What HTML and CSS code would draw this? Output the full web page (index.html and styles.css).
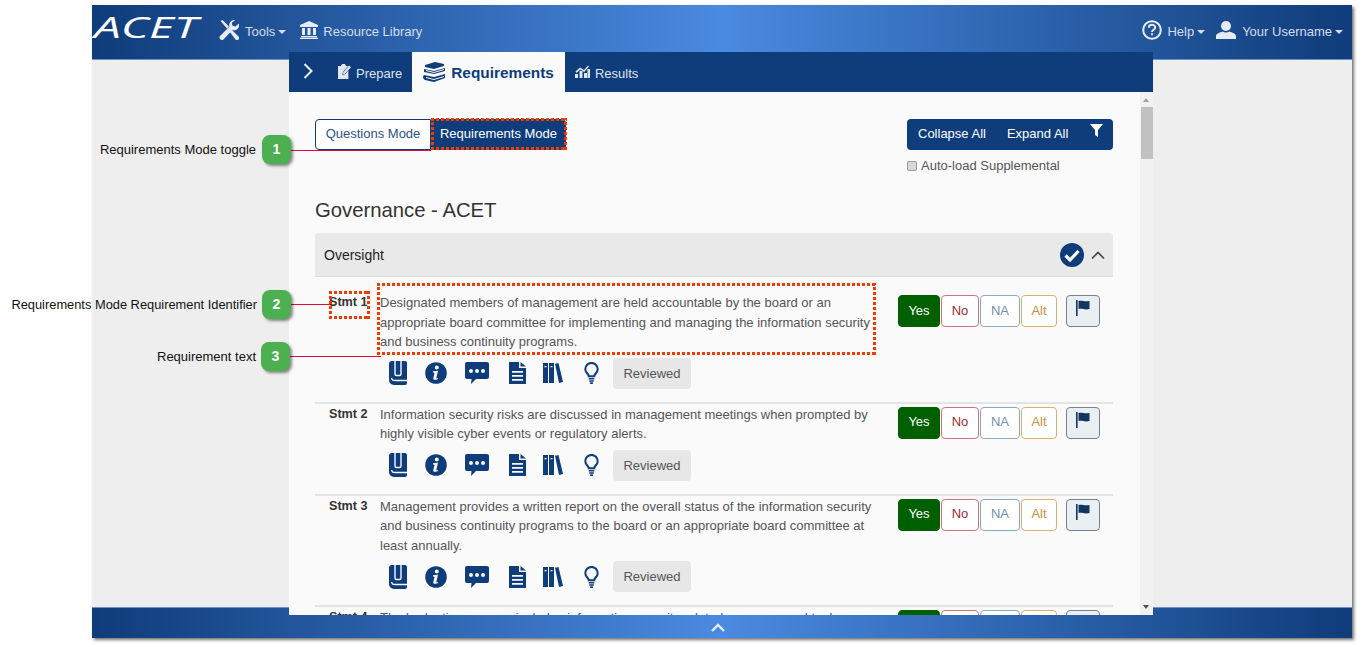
FILE: index.html
```html
<!DOCTYPE html>
<html>
  <head>
    <meta charset="UTF-8">
    <title>ACET - Requirements Mode</title>
    <link rel="stylesheet" href="styles.css">
  </head>
  <body>
    <!-- Icones usados nas linhas -->
    <svg class="sprite" width="0" height="0">
      <symbol id="i-book" viewBox="0 0 18 24">
        <path d="M3 0h13a2 2 0 0 1 2 2v20a2 2 0 0 1-2 2H5a5 5 0 0 1-5-5V3a3 3 0 0 1 3-3z"/>
        <path fill="none" stroke="#fafafa" stroke-width="1.400" d="M6 0v13a1.500 1.500 0 0 0 1.500 1.500h3A1.500 1.500 0 0 0 12 13V0M18 19.500H6.500c-3 0-3-.2-4-2.500"/>
      </symbol>
      <symbol id="i-info" viewBox="0 0 22 22">
        <circle cx="11" cy="11" r="10.800"/>
        <path fill="#fafafa" d="M11.800 3.500a2 2 0 1 1 0 4 2 2 0 0 1 0-4zM8 9.300l5-.6-1.700 7.300c-.1.500.4.600 1.700 0l-.2.900c-1.800 1.100-4.800 1.500-4.500-.7l1.200-5.300-1.600-.6z"/>
      </symbol>
      <symbol id="i-comment" viewBox="0 0 24 24">
        <path fill-rule="evenodd" d="M2 1h20a2 2 0 0 1 2 2v13a2 2 0 0 1-2 2H11l-5 5 .5-5H2a2 2 0 0 1-2-2V3a2 2 0 0 1 2-2zm4 7a2 2 0 1 0 0 4 2 2 0 0 0 0-4zm6 0a2 2 0 1 0 0 4 2 2 0 0 0 0-4zm6 0a2 2 0 1 0 0 4 2 2 0 0 0 0-4z"/>
      </symbol>
      <symbol id="i-file" viewBox="0 0 17 22">
        <path fill-rule="evenodd" d="M0 0h10v6h7v16H0zm11.500 0l5.500 4.500h-5.500zM3 9v1.800h11V9zm0 4v1.800h11V13zm0 4v1.800h11V17z"/>
      </symbol>
      <symbol id="i-library" viewBox="0 0 20 20">
        <path fill-rule="evenodd" d="M0 0h5v20H0zM1.500 3v1.200h2V3zM6 0h5v20H6zM7.500 3v1.200h2V3zM12 .8L15.500 0 20 19l-4 1z"/>
      </symbol>
      <symbol id="i-bulb" viewBox="0 0 16 24">
        <path fill="none" stroke="currentColor" stroke-width="2.200" d="M5 15.500c0-2.500-3.800-3.800-3.800-7.700a6.800 6.800 0 0 1 13.600 0c0 3.900-3.800 5.200-3.800 7.700z"/>
        <path d="M5 17.500h6v1.500H5zM5.500 20h5v1.500h-5zM6.500 22h3v2h-3z"/>
      </symbol>
      <symbol id="i-flag" viewBox="0 0 14 16">
        <path d="M0 0h1.600v16H0zM2.500 1c3-1.200 6 1.200 11 0v8c-5 1.300-8-1.200-11 0z"/>
      </symbol>
    </svg>

    <div class="window">
      <header class="top-nav">
        <span class="logo">ACET</span>
        <a class="nav-item nav-tools">
          <svg class="nav-icon" width="20" height="20" viewBox="0 0 20 20"><path d="M1.500 1l2-1 6.500 6.500-2 2zM10.500 11.500l2-2 7 7a2 2 0 0 1-3 3z"/><path d="M15 0a5 5 0 0 0-4.500 6.600L1 16a2.500 2.500 0 0 0 3.500 3.500l9-9.500A5 5 0 0 0 19.800 3.500L16.500 6.500l-3-.8-.7-2.900L16 .2A5 5 0 0 0 15 0z"/></svg>
          Tools<i class="caret"></i>
        </a>
        <a class="nav-item nav-library">
          <svg class="nav-icon" width="18" height="18" viewBox="0 0 18 18"><path d="M9 0l9 4v2H0V4zM2 7h3v7H2zM7.500 7h3v7h-3zM13 7h3v7h-3zM1 15h16v1.200H1zM0 16.800h18V18H0z"/></svg>
          Resource Library
        </a>
        <span class="nav-spacer"></span>
        <a class="nav-item nav-help">
          <svg class="nav-icon" width="20" height="20" viewBox="0 0 20 20"><circle cx="10" cy="10" r="8.800" fill="none" stroke="currentColor" stroke-width="2"/><path fill="none" stroke="currentColor" stroke-width="2" d="M6.800 7.800c0-4 6.400-4 6.400-.3 0 2.300-3.200 2.300-3.200 4.500"/><path d="M9 13.300h2v2H9z"/></svg>
          Help<i class="caret"></i>
        </a>
        <a class="nav-item">
          <svg class="nav-icon" width="20" height="18" viewBox="0 0 20 18"><ellipse cx="10" cy="5" rx="5" ry="5"/><path d="M0 18v-3c0-2.500 4-3.500 6.500-4.500 2 1.300 5 1.300 7 0C16 11.500 20 12.500 20 15v3z"/></svg>
          Your Username<i class="caret"></i>
        </a>
      </header>

      <div class="backdrop"></div>

      <footer class="bottom-bar">
        <svg width="14" height="9" viewBox="0 0 14 9"><path fill="none" stroke="#e8eef8" stroke-width="2.400" d="M1 8l6-6 6 6"/></svg>
      </footer>

      <main class="panel">
        <nav class="tabs">
          <svg class="tab-arrow" width="10" height="16" viewBox="0 0 10 16"><path fill="none" stroke="#e8eef8" stroke-width="2" d="M1.500 1l7 7-7 7"/></svg>
          <a class="tab tab-prepare">
            <svg width="14" height="15" viewBox="0 0 14 15"><path fill="#dfe6f0" d="M1 2h3l1-2h3l1 2h2l-5 6-.6 3 3-1 3-3.500V15H1z"/><path fill="#dfe6f0" d="M12 1.500l2 1.800-6 6.500-2 .4.400-2z"/></svg>
            Prepare
          </a>
          <a class="tab tab-active">
            <svg width="23" height="20" viewBox="0 0 23 20"><path fill="#0f3c7a" d="M2 3l10-3 9 2v2L11 7 2 5zM1 7l10 2 11-3v3L11 12 1 10zM1 13l10 2 11-3v4L11 20l-9-2a3 3 0 0 1-1-5z"/><path fill="none" stroke="#fafafa" d="M3 15.500l8 2 10-3M3 8.500l8 2 10-3"/></svg>
            Requirements
          </a>
          <a class="tab">
            <svg width="15" height="13" viewBox="0 0 15 13"><path fill="#dfe6f0" d="M0 9h3v4H0zM4.500 6h3v7h-3zM9 8h3v5H9zM12.500 4h2.500v9h-2.500zM.5 6.500L5 2.500l4 2.500L13 .5l1 1L9.200 7 5.200 4.500 1.500 8z"/></svg>
            Results
          </a>
        </nav>

        <div class="panel-body">
          <div class="content">
            <div class="toolbar">
              <div class="mode-toggle">
                <button class="mode-btn">Questions Mode</button>
                <button class="mode-btn mode-on">Requirements Mode</button>
              </div>
              <div class="toolbar-right">
                <div class="bulk-actions">
                  <button class="bulk-btn">Collapse All</button>
                  <button class="bulk-btn">Expand All</button>
                  <button class="bulk-btn bulk-filter">
                    <svg width="13" height="13" viewBox="0 0 13 13"><path fill="#fff" d="M0 0h13L8 6v7L5 11V6z"/></svg>
                  </button>
                </div>
                <label class="auto-load"><input type="checkbox"> Auto-load Supplemental</label>
              </div>
            </div>

            <h2 class="domain-title">Governance - ACET</h2>

            <div class="accordion-head">
              <span>Oversight</span>
              <svg class="done-icon" width="24" height="24" viewBox="0 0 24 24"><circle cx="12" cy="12" r="12" fill="#0f3c7a"/><path fill="none" stroke="#fff" stroke-width="3.200" d="M5.500 12.500l4.500 4.500 8.500-9"/></svg>
              <svg class="fold-icon" width="14" height="8" viewBox="0 0 14 8"><path fill="none" stroke="#444" stroke-width="1.600" d="M1 7.500l6-6 6 6"/></svg>
            </div>

            <div class="stmt stmt-first">
              <b class="stmt-id">Stmt 1</b>
              <div class="stmt-main">
                <p class="stmt-text">Designated members of management are held accountable by the board or an appropriate board committee for implementing and managing the information security and business continuity programs.</p>
                <div class="stmt-tools">
                  <svg class="t-book"><use href="#i-book"/></svg>
                  <svg class="t-info"><use href="#i-info"/></svg>
                  <svg class="t-comment"><use href="#i-comment"/></svg>
                  <svg class="t-file"><use href="#i-file"/></svg>
                  <svg class="t-library"><use href="#i-library"/></svg>
                  <svg class="t-bulb"><use href="#i-bulb"/></svg>
                  <button class="reviewed">Reviewed</button>
                </div>
              </div>
              <div class="answers">
                <button class="ans ans-yes">Yes</button>
                <button class="ans ans-no">No</button>
                <button class="ans ans-na">NA</button>
                <button class="ans ans-alt">Alt</button>
                <button class="ans ans-flag"><svg><use href="#i-flag"/></svg></button>
              </div>
            </div>

            <div class="stmt">
              <b class="stmt-id">Stmt 2</b>
              <div class="stmt-main">
                <p class="stmt-text">Information security risks are discussed in management meetings when prompted by highly visible cyber events or regulatory alerts.</p>
                <div class="stmt-tools">
                  <svg class="t-book"><use href="#i-book"/></svg>
                  <svg class="t-info"><use href="#i-info"/></svg>
                  <svg class="t-comment"><use href="#i-comment"/></svg>
                  <svg class="t-file"><use href="#i-file"/></svg>
                  <svg class="t-library"><use href="#i-library"/></svg>
                  <svg class="t-bulb"><use href="#i-bulb"/></svg>
                  <button class="reviewed">Reviewed</button>
                </div>
              </div>
              <div class="answers">
                <button class="ans ans-yes">Yes</button>
                <button class="ans ans-no">No</button>
                <button class="ans ans-na">NA</button>
                <button class="ans ans-alt">Alt</button>
                <button class="ans ans-flag"><svg><use href="#i-flag"/></svg></button>
              </div>
            </div>

            <div class="stmt">
              <b class="stmt-id">Stmt 3</b>
              <div class="stmt-main">
                <p class="stmt-text">Management provides a written report on the overall status of the information security and business continuity programs to the board or an appropriate board committee at least annually.</p>
                <div class="stmt-tools">
                  <svg class="t-book"><use href="#i-book"/></svg>
                  <svg class="t-info"><use href="#i-info"/></svg>
                  <svg class="t-comment"><use href="#i-comment"/></svg>
                  <svg class="t-file"><use href="#i-file"/></svg>
                  <svg class="t-library"><use href="#i-library"/></svg>
                  <svg class="t-bulb"><use href="#i-bulb"/></svg>
                  <button class="reviewed">Reviewed</button>
                </div>
              </div>
              <div class="answers">
                <button class="ans ans-yes">Yes</button>
                <button class="ans ans-no">No</button>
                <button class="ans ans-na">NA</button>
                <button class="ans ans-alt">Alt</button>
                <button class="ans ans-flag"><svg><use href="#i-flag"/></svg></button>
              </div>
            </div>

            <div class="stmt">
              <b class="stmt-id">Stmt 4</b>
              <div class="stmt-main">
                <p class="stmt-text">The budgeting process includes information security related expenses and tools.</p>
              </div>
              <div class="answers">
                <button class="ans ans-yes">Yes</button>
                <button class="ans ans-no">No</button>
                <button class="ans ans-na">NA</button>
                <button class="ans ans-alt">Alt</button>
                <button class="ans ans-flag"><svg><use href="#i-flag"/></svg></button>
              </div>
            </div>
          </div>

          <div class="scrollbar">
            <i class="arrow-up"></i>
            <span class="thumb"></span>
            <i class="arrow-down"></i>
          </div>
        </div>
      </main>
    </div>

    <!-- Anotacoes por cima da tela -->
    <span class="note note-1">Requirements Mode toggle</span>
    <span class="badge badge-1">1</span>
    <span class="leader leader-1"></span>
    <span class="dashed dashed-1"></span>

    <span class="note note-2">Requirements Mode Requirement Identifier</span>
    <span class="badge badge-2">2</span>
    <span class="leader leader-2"></span>
    <span class="dashed dashed-2"></span>

    <span class="note note-3">Requirement text</span>
    <span class="badge badge-3">3</span>
    <span class="leader leader-3"></span>
    <span class="dashed dashed-3"></span>
  </body>
</html>
```

FILE: styles.css
```css
/* Pagina */
html, body {
  height: 647px;
  overflow: hidden;
}

body {
  margin: 0;
  position: relative;
  background-color: white;
  font-family: "Liberation Sans", Arial, sans-serif;
  font-size: 13px;
  color: #555;
}

.sprite {
  position: absolute;
}

button {
  font-family: inherit;
  font-size: 13px;
  cursor: pointer;
}

/* Janela */
.window {
  display: grid;
  grid-template-rows: 55px 1fr 31px;
  grid-template-columns: 1fr;
  width: 1260px;
  height: 633px;
  margin: 5px 0 0 92px;
  box-shadow: 2px 2px 3px rgba(0, 0, 0, 0.55);
  background-color: #eeeeee;
}

.top-nav {
  grid-row: 1;
  grid-column: 1;
  display: flex;
  align-items: center;
  padding: 0 9px 1px 2px;
  color: #d5deec;
  background: linear-gradient(90deg, #0f3c7a 0%, #4a8ae0 50%, #0f3c7a 100%);
  border-bottom: 1px solid #6e93c8;
  box-sizing: border-box;
}

.logo {
  width: 125px;
  margin-top: -11px;
  font-family: "Open Sans", sans-serif;
  font-style: italic;
  font-size: 29px;
  color: white;
  transform: scaleX(1.65);
  transform-origin: left center;
}

.nav-item {
  display: flex;
  align-items: center;
  gap: 6px;
  white-space: nowrap;
}

.nav-icon {
  fill: currentColor;
  color: #e6ebf4;
  margin-top: -4px;
}

.nav-tools {
  margin-right: 14px;
}

.nav-library {
  gap: 5px;
}

.nav-spacer {
  flex: 1;
}

.nav-help {
  margin-right: 11px;
}

.nav-help .nav-icon {
  margin-right: -1px;
}

.caret {
  display: inline-block;
  margin-left: -3px;
  border-top: 4px solid;
  border-left: 4px solid transparent;
  border-right: 4px solid transparent;
}

.backdrop {
  grid-row: 2;
  grid-column: 1;
}

.bottom-bar {
  grid-row: 3;
  grid-column: 1;
  display: flex;
  align-items: center;
  justify-content: center;
  background: linear-gradient(90deg, #0f3c7a 0%, #4a8ae0 50%, #0f3c7a 100%);
  border-top: 1px solid #6e93c8;
  box-sizing: border-box;
}

.bottom-bar svg {
  margin: 9px 8px 0 0;
}

/* Painel central */
.panel {
  grid-row: 1 / -1;
  grid-column: 1;
  z-index: 1;
  display: flex;
  flex-direction: column;
  width: 864px;
  margin: 47px 0 23px 197px;
  overflow: hidden;
}

.tabs {
  display: flex;
  align-items: center;
  flex: none;
  height: 40px;
  background-color: #0f3c7a;
  color: #dfe6f0;
}

.tab-arrow {
  margin: -3px 0 0 14px;
}

.tab {
  display: flex;
  align-items: center;
  gap: 5px;
  height: 40px;
  padding: 2px 10px 0;
  box-sizing: border-box;
}

.tab svg {
  margin-top: -3px;
}

.tab-prepare {
  margin-left: 14px;
}

.tab-active {
  padding: 2px 11px 0 11px;
  background-color: #fafafa;
  color: #0f3c7a;
  font-weight: bold;
  font-size: 15.400px;
}

.panel-body {
  flex: 1;
  display: flex;
  min-height: 0;
  background-color: #fafafa;
}

.content {
  flex: 1;
  padding: 27px 27px 0 26px;
  overflow: hidden;
}

.scrollbar {
  flex: none;
  position: relative;
  width: 13px;
  background-color: #f1f1f1;
}

.thumb {
  position: absolute;
  top: 15px;
  left: 1px;
  right: 0;
  height: 52px;
  background-color: #c1c1c1;
}

.arrow-up, .arrow-down {
  position: absolute;
  left: 3px;
  border-left: 3.500px solid transparent;
  border-right: 3.500px solid transparent;
}

.arrow-up {
  top: 6px;
  border-bottom: 4px solid #a3a3a3;
}

.arrow-down {
  bottom: 6px;
  border-top: 4px solid #505050;
}

/* Barra de modos */
.toolbar {
  display: flex;
  justify-content: space-between;
  align-items: flex-start;
}

.mode-toggle {
  display: flex;
}

.mode-btn {
  width: 116px;
  height: 31px;
  padding: 0 0 2px;
  border: 1px solid #0f3c7a;
  border-radius: 4px 0 0 4px;
  background-color: white;
  color: #2a5288;
}

.mode-on {
  width: 135px;
  border-radius: 0 4px 4px 0;
  background-color: #0f3c7a;
  color: white;
}

.bulk-actions {
  display: flex;
  width: 206px;
  height: 31px;
  border-radius: 4px;
  background-color: #0f3c7a;
}

.bulk-btn {
  padding: 0 0 2px 11px;
  margin-right: 21px;
  border: none;
  background: none;
  color: white;
}

.bulk-btn + .bulk-btn {
  padding-left: 0;
  margin-right: 0;
}

.bulk-filter {
  margin-left: auto;
  padding: 0 10px 6px 0;
}

.auto-load {
  display: flex;
  align-items: center;
  gap: 4px;
  margin-top: 8px;
  color: #555;
}

.auto-load input {
  width: 10px;
  height: 10px;
  margin: 0;
  appearance: none;
  border: 1px solid #999;
  border-radius: 2px;
  background-color: #d8d8d8;
}

.domain-title {
  margin: 25px 0 11px;
  font-size: 20.300px;
  font-weight: normal;
  line-height: 24px;
  color: #333;
}

.accordion-head {
  display: flex;
  align-items: center;
  height: 44px;
  padding: 0 8px 0 9px;
  border-radius: 4px 4px 0 0;
  border-bottom: 1px solid #dddddd;
  background-color: #e9e9e9;
  box-sizing: border-box;
  font-size: 14px;
  color: #222;
}

.done-icon {
  margin-left: auto;
}

.fold-icon {
  margin-left: 7px;
}

/* Linhas de requisito */
.stmt {
  display: grid;
  grid-template-columns: 51px 518px 203px;
  padding: 1px 0 13px 14px;
  border-bottom: 2px solid #e4e4e4;
}

.stmt-first {
  padding-top: 16px;
}

.stmt-id {
  color: #333;
  font-size: 12.600px;
  line-height: 19.500px;
}

.stmt-text {
  margin: 0;
  width: 497px;
  line-height: 19.500px;
}

.stmt-tools {
  display: flex;
  align-items: center;
  height: 31px;
  margin-top: 6px;
}

.stmt-tools svg {
  fill: #0f3c7a;
  color: #0f3c7a;
}

.t-book { width: 18px; height: 24px; margin: 0 0 0 9px; }
.t-info { width: 22px; height: 22px; margin: 0 0 0 18px; }
.t-comment { width: 24px; height: 24px; margin: 0 0 0 18px; }
.t-file { width: 17px; height: 22px; margin: 0 0 0 20px; }
.t-library { width: 20px; height: 20px; margin: 0 0 0 17px; }
.t-bulb { width: 15px; height: 22px; margin: 0 0 0 21px; }

.reviewed {
  height: 31px;
  width: 78px;
  margin-left: 14px;
  padding: 0;
  border: none;
  border-radius: 4px;
  background-color: #e7e7e7;
  color: #555;
}

.answers {
  display: flex;
  align-items: flex-start;
  gap: 1px;
  margin-top: 2px;
}

.ans {
  height: 32px;
  padding: 0 0 2px;
  border: 1px solid;
  border-radius: 4px;
  background-color: white;
}

.ans-yes { width: 42px; border-color: #006000; background-color: #006000; color: white; }
.ans-no { width: 38px; border-color: #c9777a; color: #a02a2e; }
.ans-na { width: 40px; border-color: #86a9c6; color: #6f8fac; }
.ans-alt { width: 36px; border-color: #dbb06d; color: #c48f3c; }

.ans-flag {
  width: 34px;
  margin-left: 8px;
  border-color: #7b8187;
  background-color: #e9eff3;
}

.ans-flag svg {
  width: 14px;
  height: 16px;
  margin-bottom: 1px;
  fill: #12365f;
}

/* Anotacoes */
.note {
  position: absolute;
  right: 1105px;
  color: #111;
  white-space: nowrap;
  line-height: 16px;
}

.note-1 { top: 142px; }
.note-2 { top: 297px; right: 1104px; font-size: 12.850px; }
.note-3 { top: 349px; }

.badge {
  position: absolute;
  left: 262px;
  width: 29px;
  height: 29px;
  border-radius: 8px;
  background-color: #4caf50;
  box-shadow: 2px 2px 3px rgba(0, 0, 0, 0.45);
  color: white;
  font-weight: bold;
  font-size: 14px;
  line-height: 29px;
  text-align: center;
  z-index: 3;
}

.badge-1 { top: 135px; }
.badge-2 { top: 290px; }
.badge-3 { top: 342px; left: 261px; }

.leader {
  position: absolute;
  left: 290px;
  height: 1px;
  background-color: #e8003c;
  z-index: 2;
}

.leader-1 { top: 150px; width: 141px; }
.leader-2 { top: 304px; width: 40px; }
.leader-3 { top: 356px; width: 91px; }

/* Contorno tracejado: quatro faixas repetidas */
.dashed {
  position: absolute;
  z-index: 2;
  background:
    repeating-linear-gradient(90deg, #f33900 0 3px, transparent 3px 5px) left top / 100% 3px no-repeat,
    repeating-linear-gradient(90deg, #f33900 0 3px, transparent 3px 5px) left bottom / 100% 3px no-repeat,
    repeating-linear-gradient(0deg, #f33900 0 3px, transparent 3px 5px) left top / 3px 100% no-repeat,
    repeating-linear-gradient(0deg, #f33900 0 3px, transparent 3px 5px) right top / 3px 100% no-repeat;
}

.dashed-1 { left: 431px; top: 118px; width: 136px; height: 32px; }
.dashed-2 { left: 329px; top: 291px; width: 41px; height: 28px; }
.dashed-3 { left: 377px; top: 283px; width: 499px; height: 72px; }
```
